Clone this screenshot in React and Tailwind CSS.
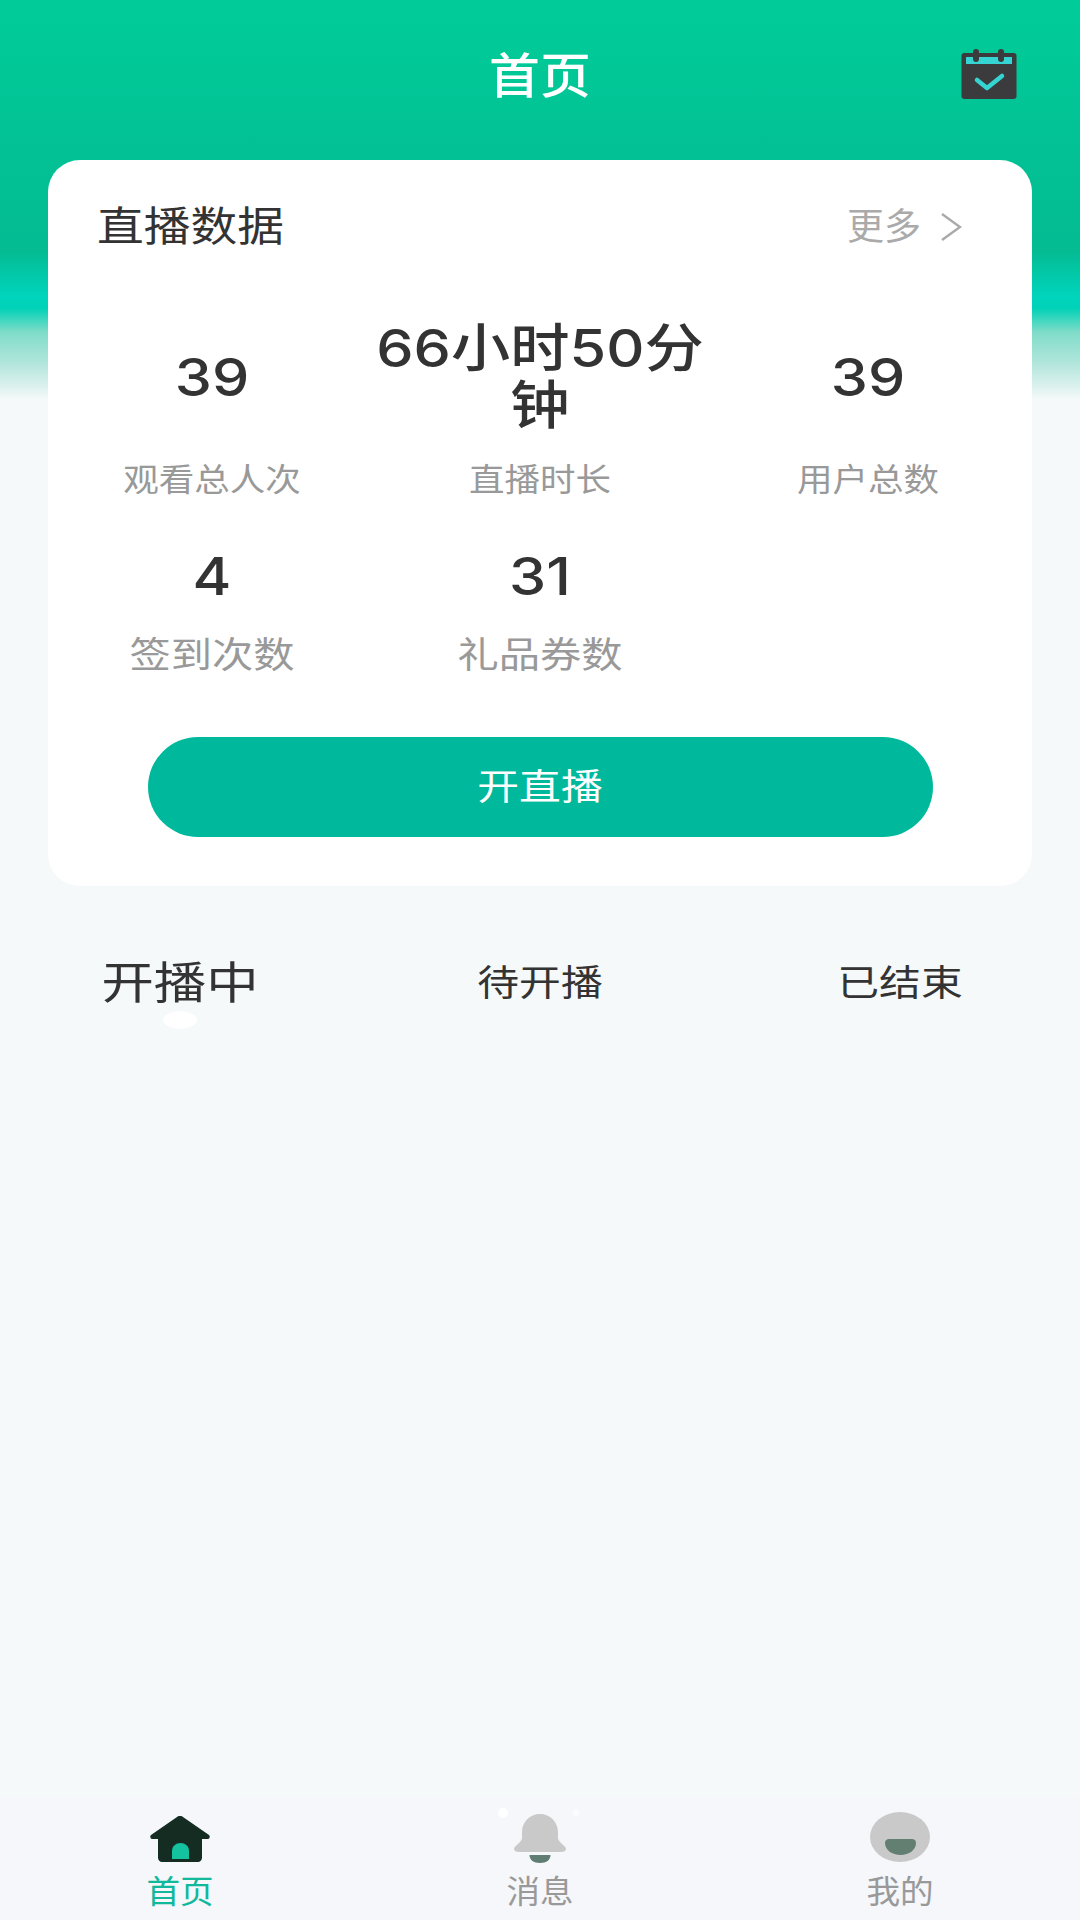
import React from 'react';

const FONT = 'font-["Inter","Noto_Sans_CJK_SC",sans-serif]';

const stats = [
  { value: '39', label: '观看总人次' },
  { value: '66小时50分钟', label: '直播时长' },
  { value: '39', label: '用户总数' },
  { value: '4', label: '签到次数' },
  { value: '31', label: '礼品券数' },
];

const CalendarIcon = () => (
  <svg width="56" height="51" viewBox="0 0 56 51">
    <rect x="0.5" y="4" width="55" height="46" rx="3" fill="#3b3a3c" />
    <rect x="5" y="8" width="46" height="7" fill="#36d3d3" />
    <rect x="12" y="0" width="6" height="13" rx="3" fill="#3b3a3c" />
    <rect x="37" y="0" width="6" height="13" rx="3" fill="#3b3a3c" />
    <path d="M16 31l10 8 15-12" fill="none" stroke="#36d3d3" strokeWidth="4.500" strokeLinecap="round" strokeLinejoin="round" />
  </svg>
);

const HomeIcon = () => (
  <svg width="60" height="46" viewBox="0 0 60 46">
    <path d="M27 1c2-1.500 4-1.500 6 0L59 19c1.500 1.500.5 4-2 4h-5v19c0 2-2 4-4 4H12c-2 0-4-2-4-4V23H3c-2.500 0-3.500-2.500-2-4z" fill="#142c22" />
    <path d="M22 43V35c0-5 4-8 8.500-8S39 30 39 35v8z" fill="#14c2a0" />
  </svg>
);

const BellIcon = () => (
  <svg width="52" height="50" viewBox="0 0 52 50">
    <path d="M26 0c10 0 18 8 18 18v6c0 4 8 8 8 11 0 2-2 3-5 3H5c-3 0-5-1-5-3 0-3 8-7 8-11v-6C8 8 16 0 26 0z" fill="#c9c9c9" />
    <path d="M15.500 41h21c0 5-4 8-10.500 8s-10.500-3-10.500-8z" fill="#5f7d72" />
  </svg>
);

const UserIcon = () => (
  <svg width="60" height="50" viewBox="0 0 60 50">
    <ellipse cx="30" cy="25" rx="30" ry="25" fill="#c9c9c9" />
    <path d="M15 31c0-3 2-4 4-4h23c2 0 4 1 4 4 0 7-7 12-15.500 12S15 38 15 31z" fill="#637f72" />
  </svg>
);

const tabs = [
  { label: '首页', icon: <HomeIcon />, color: 'text-[#12b89c]', box: 'pt-[4px]' },
  { label: '消息', icon: <BellIcon />, color: 'text-[#999999]', box: 'pt-[2px]' },
  { label: '我的', icon: <UserIcon />, color: 'text-[#999999]', box: '' },
];

export default function App() {
  return (
    <div className={`${FONT} flex h-[1920px] w-[1080px] flex-col overflow-hidden bg-[linear-gradient(180deg,#00cc99_0px,#04bb92_250px,#00d4bc_296px,#00d2b8_308px,#7fdcc8_332px,#b5e6de_365px,#f5f9f9_400px)]`}>
      <header className="grid h-[160px] shrink-0 grid-cols-[1fr_auto_1fr] items-start px-[63px] pt-[40px]">
        <div />
        <h1 className="scale-x-[1.06] text-[48px] font-medium leading-[72px] text-white">首页</h1>
        <div className="flex justify-end pt-[9px]">
          <CalendarIcon />
        </div>
      </header>

      <section className="mx-[48px] flex h-[726px] shrink-0 flex-col rounded-[32px] bg-white">
        <div className="flex h-[134px] items-center justify-between pl-[49px] pr-[70px]">
          <h2 className="origin-left scale-x-[1.14] text-[41px] font-normal text-[#333333]">直播数据</h2>
          <div className="flex items-center gap-[19px] text-[#aaaaaa]">
            <span className="text-[37px]">更多</span>
            <svg width="22" height="30" viewBox="0 0 22 30" fill="none" stroke="#aaaaaa" strokeWidth="2.500">
              <path d="M2 2l18 13L2 28" />
            </svg>
          </div>
        </div>

        <div className="grid grid-cols-3">
          {stats.map((stat, i) => (
            <div key={stat.label} className={`flex flex-col items-center ${i < 3 ? 'h-[234px]' : 'h-[209px]'}`}>
              <div className={`flex w-full scale-x-[1.14] items-center justify-center text-center text-[52px] font-medium leading-[57px] text-[#333333] ${i < 3 ? 'h-[152px] pt-[14px]' : 'h-[96px]'}`}>
                {stat.value}
              </div>
              <div className={i < 3 ? 'mt-[10px] scale-x-[1.11] text-[32px] text-[#999999]' : 'mt-[4px] scale-x-[1.146] text-[36px] text-[#999999]'}>
                {stat.label}
              </div>
            </div>
          ))}
        </div>

        <button className="mx-auto h-[100px] w-[785px] rounded-full bg-[#00b99c] text-white">
          <span className="inline-block scale-x-[1.16] text-[36px]">开直播</span>
        </button>
      </section>

      <nav className="flex h-[194px] shrink-0 items-center text-[#333333]">
        <div className="relative flex w-[360px] justify-center">
          <span className="scale-x-[1.19] text-[44px] leading-[60px]">开播中</span>
          <span className="absolute left-[163px] top-[58px] h-[18px] w-[34px] rounded-[50%] bg-white" />
        </div>
        <div className="flex w-[360px] justify-center">
          <span className="scale-x-[1.16] text-[36px]">待开播</span>
        </div>
        <div className="flex w-[360px] justify-center">
          <span className="scale-x-[1.16] text-[36px]">已结束</span>
        </div>
      </nav>

      <div className="flex-1" />

      <footer className="grid h-[122px] shrink-0 grid-cols-3 bg-[#f5f7fb]">
        {tabs.map((tab) => (
          <div key={tab.label} className="relative flex flex-col items-center pt-[14px]">
            <div className={`h-[53px] ${tab.box}`}>{tab.icon}</div>
            <span className={`mt-[5px] scale-x-[1.05] text-[32px] leading-[44px] ${tab.color}`}>{tab.label}</span>
            {tab.label === '消息' && (
              <>
                <span className="absolute left-[138px] top-[10px] h-[10px] w-[10px] rounded-full bg-white" />
                <span className="absolute left-[213px] top-[11px] h-[8px] w-[6px] rounded-full bg-white/60" />
              </>
            )}
          </div>
        ))}
      </footer>
    </div>
  );
}
